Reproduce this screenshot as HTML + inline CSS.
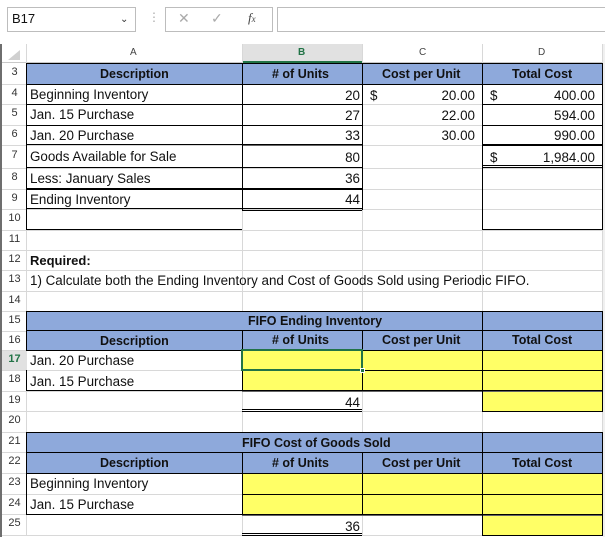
<!DOCTYPE html>
<html><head><meta charset="utf-8"><style>
*{margin:0;padding:0;box-sizing:border-box}
body{width:605px;height:537px;background:#fff;position:relative;overflow:hidden;font-family:"Liberation Sans",Arial,sans-serif;font-size:12px;color:#000}
div{position:absolute}
.t{white-space:nowrap;font-size:13.4px;color:#111}
.r{text-align:right;width:100px}
.rn{left:2px;width:25px;text-align:center;font-size:11px;color:#333}
.bl{background:#000}
.gl{background:#d8d8d8}
.blue{background:#8EA9DB}
.yel{background:#FFFF66}
.b{font-weight:bold;font-size:12.5px}
</style></head><body>
<div style="left:0;top:0;width:605px;height:44px;background:#fff"></div>
<div style="left:7px;top:7px;width:129px;height:25px;border:1px solid #bdbdbd"></div>
<div class="t" style="left:12px;top:11px;font-size:13px">B17</div>
<div style="left:120px;top:14px;font-size:10px;color:#333">&#8964;</div>
<div style="left:148px;top:10px;color:#aaa;font-size:12px">&#8942;</div>
<div style="left:165px;top:7px;width:108px;height:25px;border:1px solid #bdbdbd"></div>
<div style="left:178px;top:10px;color:#aaa;font-size:14px">&#10005;</div>
<div style="left:211px;top:10px;color:#aaa;font-size:14px">&#10003;</div>
<div style="left:248px;top:10px;font-family:'Liberation Serif',serif;font-style:italic;font-size:13px;color:#444">f<span style="font-size:9px">x</span></div>
<div style="left:277px;top:7px;width:330px;height:25px;border:1px solid #bdbdbd"></div>
<div style="left:0;top:44px;width:2px;height:493px;background:#6e6e6e"></div>
<div style="left:2px;top:44px;width:600px;height:19px;background:#fff;border-bottom:1px solid #c8c8c8"></div>
<div style="left:242px;top:44px;width:120px;height:19px;background:#e1e1e1;border-bottom:2px solid #217346"></div>
<div style="left:8px;top:50px;width:0;height:0;border-left:12px solid transparent;border-bottom:10px solid #d0d0d0"></div>
<div class="gl" style="left:26px;top:44px;width:1px;height:491px"></div>
<div class="gl" style="left:242px;top:44px;width:1px;height:491px"></div>
<div class="gl" style="left:362px;top:44px;width:1px;height:491px"></div>
<div class="gl" style="left:482px;top:44px;width:1px;height:491px"></div>
<div class="gl" style="left:602px;top:44px;width:1px;height:491px"></div>
<div style="left:603px;top:44px;width:2px;height:493px;background:#f0f0f0"></div>
<div style="left:130px;top:47px;font-size:10px;color:#444">A</div>
<div style="left:298px;top:47px;font-size:10px;color:#217346;font-weight:bold">B</div>
<div style="left:419px;top:47px;font-size:10px;color:#444">C</div>
<div style="left:538px;top:47px;font-size:10px;color:#444">D</div>
<div class="gl" style="left:2px;top:84px;width:600px;height:1px"></div>
<div class="gl" style="left:2px;top:104px;width:600px;height:1px"></div>
<div class="gl" style="left:2px;top:125px;width:600px;height:1px"></div>
<div class="gl" style="left:2px;top:145px;width:600px;height:1px"></div>
<div class="gl" style="left:2px;top:168px;width:600px;height:1px"></div>
<div class="gl" style="left:2px;top:189px;width:600px;height:1px"></div>
<div class="gl" style="left:2px;top:209px;width:600px;height:1px"></div>
<div class="gl" style="left:2px;top:230px;width:600px;height:1px"></div>
<div class="gl" style="left:2px;top:250px;width:600px;height:1px"></div>
<div class="gl" style="left:2px;top:270px;width:600px;height:1px"></div>
<div class="gl" style="left:2px;top:291px;width:600px;height:1px"></div>
<div class="gl" style="left:2px;top:311px;width:600px;height:1px"></div>
<div class="gl" style="left:2px;top:331px;width:600px;height:1px"></div>
<div class="gl" style="left:2px;top:350px;width:600px;height:1px"></div>
<div class="gl" style="left:2px;top:370px;width:600px;height:1px"></div>
<div class="gl" style="left:2px;top:391px;width:600px;height:1px"></div>
<div class="gl" style="left:2px;top:411px;width:600px;height:1px"></div>
<div class="gl" style="left:2px;top:432px;width:600px;height:1px"></div>
<div class="gl" style="left:2px;top:452px;width:600px;height:1px"></div>
<div class="gl" style="left:2px;top:473px;width:600px;height:1px"></div>
<div class="gl" style="left:2px;top:494px;width:600px;height:1px"></div>
<div class="gl" style="left:2px;top:514px;width:600px;height:1px"></div>
<div class="gl" style="left:2px;top:535px;width:600px;height:1px"></div>
<div class="blue" style="left:27px;top:63px;width:575px;height:21px"></div>
<div class="blue" style="left:27px;top:311px;width:575px;height:39px"></div>
<div class="blue" style="left:27px;top:432px;width:575px;height:41px"></div>
<div class="yel" style="left:242px;top:350px;width:360px;height:41px"></div>
<div class="yel" style="left:482px;top:391px;width:120px;height:20px"></div>
<div class="yel" style="left:242px;top:473px;width:360px;height:41px"></div>
<div class="yel" style="left:482px;top:514px;width:120px;height:21px"></div>
<div class="bl" style="left:26px;top:63px;width:577px;height:1px"></div>
<div class="bl" style="left:26px;top:84px;width:577px;height:1px"></div>
<div class="bl" style="left:26px;top:104px;width:336px;height:1px"></div>
<div class="bl" style="left:482px;top:104px;width:120px;height:1px"></div>
<div class="bl" style="left:26px;top:125px;width:336px;height:1px"></div>
<div class="bl" style="left:482px;top:125px;width:120px;height:1px"></div>
<div class="bl" style="left:26px;top:144px;width:336px;height:1px"></div>
<div style="left:242px;top:145px;width:120px;height:1px;background:#666"></div>
<div class="bl" style="left:482px;top:144px;width:120px;height:2px"></div>
<div class="bl" style="left:26px;top:167px;width:336px;height:1px"></div>
<div class="bl" style="left:482px;top:165px;width:120px;height:1px"></div>
<div class="bl" style="left:482px;top:167px;width:120px;height:1px"></div>
<div class="bl" style="left:26px;top:188px;width:336px;height:2px"></div>
<div class="bl" style="left:26px;top:208px;width:336px;height:1px"></div>
<div class="bl" style="left:242px;top:210px;width:120px;height:1px"></div>
<div class="bl" style="left:26px;top:229px;width:216px;height:1px"></div>
<div class="bl" style="left:482px;top:229px;width:120px;height:1px"></div>
<div class="bl" style="left:26px;top:63px;width:1px;height:167px"></div>
<div class="bl" style="left:242px;top:63px;width:1px;height:147px"></div>
<div class="bl" style="left:362px;top:63px;width:1px;height:147px"></div>
<div class="bl" style="left:482px;top:63px;width:1px;height:167px"></div>
<div class="bl" style="left:602px;top:63px;width:1px;height:167px"></div>
<div class="bl" style="left:26px;top:311px;width:577px;height:1px"></div>
<div class="bl" style="left:26px;top:330px;width:577px;height:1px"></div>
<div class="bl" style="left:26px;top:350px;width:577px;height:1px"></div>
<div class="bl" style="left:242px;top:370px;width:361px;height:1px"></div>
<div class="bl" style="left:26px;top:390px;width:577px;height:1px"></div>
<div style="left:242px;top:391px;width:361px;height:1px;background:#666"></div>
<div class="bl" style="left:482px;top:411px;width:121px;height:1px"></div>
<div class="bl" style="left:242px;top:409px;width:120px;height:1px"></div>
<div class="bl" style="left:242px;top:411px;width:120px;height:1px"></div>
<div class="bl" style="left:26px;top:311px;width:1px;height:80px"></div>
<div class="bl" style="left:242px;top:331px;width:1px;height:60px"></div>
<div class="bl" style="left:362px;top:331px;width:1px;height:60px"></div>
<div class="bl" style="left:482px;top:311px;width:1px;height:101px"></div>
<div class="bl" style="left:602px;top:311px;width:1px;height:101px"></div>
<div style="left:241px;top:349px;width:122px;height:22px;border:2px solid #217346"></div>
<div style="left:360px;top:368px;width:5px;height:5px;background:#217346;border:1px solid #fff"></div>
<div class="bl" style="left:26px;top:432px;width:577px;height:1px"></div>
<div class="bl" style="left:26px;top:452px;width:577px;height:1px"></div>
<div class="bl" style="left:26px;top:473px;width:577px;height:1px"></div>
<div class="bl" style="left:242px;top:494px;width:361px;height:1px"></div>
<div class="bl" style="left:26px;top:514px;width:577px;height:1px"></div>
<div style="left:242px;top:515px;width:361px;height:1px;background:#666"></div>
<div class="bl" style="left:482px;top:535px;width:121px;height:1px"></div>
<div class="bl" style="left:242px;top:533px;width:120px;height:1px"></div>
<div class="bl" style="left:242px;top:535px;width:120px;height:1px"></div>
<div class="bl" style="left:26px;top:432px;width:1px;height:83px"></div>
<div class="bl" style="left:242px;top:452px;width:1px;height:62px"></div>
<div class="bl" style="left:362px;top:452px;width:1px;height:62px"></div>
<div class="bl" style="left:482px;top:432px;width:1px;height:104px"></div>
<div class="bl" style="left:602px;top:432px;width:1px;height:104px"></div>
<div class="rn" style="top:66px">3</div><div class="rn" style="top:87px">4</div><div class="rn" style="top:107px">5</div><div class="rn" style="top:128px">6</div><div class="rn" style="top:149px">7</div><div class="rn" style="top:171px">8</div><div class="rn" style="top:192px">9</div><div class="rn" style="top:212px">10</div><div class="rn" style="top:233px">11</div><div class="rn" style="top:253px">12</div><div class="rn" style="top:273px">13</div><div class="rn" style="top:294px">14</div><div class="rn" style="top:314px">15</div><div class="rn" style="top:334px">16</div><div class="rn" style="top:351px;color:#217346;font-weight:bold;background:#e1e1e1;height:19px;padding-top:2px">17</div><div class="rn" style="top:373px">18</div><div class="rn" style="top:394px">19</div><div class="rn" style="top:414px">20</div><div class="rn" style="top:435px">21</div><div class="rn" style="top:455px">22</div><div class="rn" style="top:476px">23</div><div class="rn" style="top:497px">24</div><div class="rn" style="top:517px">25</div>
<div class="t b" style="left:100px;top:67px">Description</div>
<div class="t b" style="left:272px;top:67px">#&nbsp;of Units</div>
<div class="t b" style="left:382px;top:67px">Cost per Unit</div>
<div class="t b" style="left:512px;top:67px">Total Cost</div>
<div class="t" style="left:30px;top:87px">Beginning Inventory</div>
<div class="t" style="left:30px;top:107px">Jan. 15 Purchase</div>
<div class="t" style="left:30px;top:128px">Jan. 20 Purchase</div>
<div class="t" style="left:30px;top:149px">Goods Available for Sale</div>
<div class="t" style="left:30px;top:171px">Less: January Sales</div>
<div class="t" style="left:30px;top:192px">Ending Inventory</div>
<div class="t r" style="left:260px;top:88px">20</div><div class="t r" style="left:260px;top:108px">27</div><div class="t r" style="left:260px;top:128px">33</div><div class="t r" style="left:260px;top:150px">80</div><div class="t r" style="left:260px;top:171px">36</div><div class="t r" style="left:260px;top:192px">44</div>
<div class="t" style="left:370px;top:88px">$</div><div class="t r" style="left:375px;top:88px">20.00</div><div class="t r" style="left:375px;top:108px">22.00</div><div class="t r" style="left:375px;top:128px">30.00</div>
<div class="t" style="left:490px;top:88px">$</div><div class="t r" style="left:495px;top:88px">400.00</div><div class="t r" style="left:495px;top:108px">594.00</div><div class="t r" style="left:495px;top:128px">990.00</div>
<div class="t" style="left:490px;top:150px">$</div><div class="t r" style="left:495px;top:150px">1,984.00</div>
<div class="t b" style="left:30px;top:253px;font-size:13px">Required:</div>
<div class="t" style="left:30px;top:273px">1) Calculate both the Ending Inventory and Cost of Goods Sold using Periodic FIFO.</div>
<div class="t b" style="left:248px;top:314px">FIFO Ending Inventory</div>
<div class="t b" style="left:100px;top:334px">Description</div>
<div class="t b" style="left:272px;top:333px">#&nbsp;of Units</div>
<div class="t b" style="left:382px;top:333px">Cost per Unit</div>
<div class="t b" style="left:512px;top:333px">Total Cost</div>
<div class="t" style="left:30px;top:353px">Jan. 20 Purchase</div>
<div class="t" style="left:30px;top:374px">Jan. 15 Purchase</div>
<div class="t r" style="left:260px;top:395px">44</div>
<div class="t b" style="left:242px;top:436px">FIFO Cost of Goods Sold</div>
<div class="t b" style="left:100px;top:456px">Description</div>
<div class="t b" style="left:272px;top:456px">#&nbsp;of Units</div>
<div class="t b" style="left:382px;top:456px">Cost per Unit</div>
<div class="t b" style="left:512px;top:456px">Total Cost</div>
<div class="t" style="left:30px;top:476px">Beginning Inventory</div>
<div class="t" style="left:30px;top:497px">Jan. 15 Purchase</div>
<div class="t r" style="left:260px;top:519px">36</div>
</body></html>
